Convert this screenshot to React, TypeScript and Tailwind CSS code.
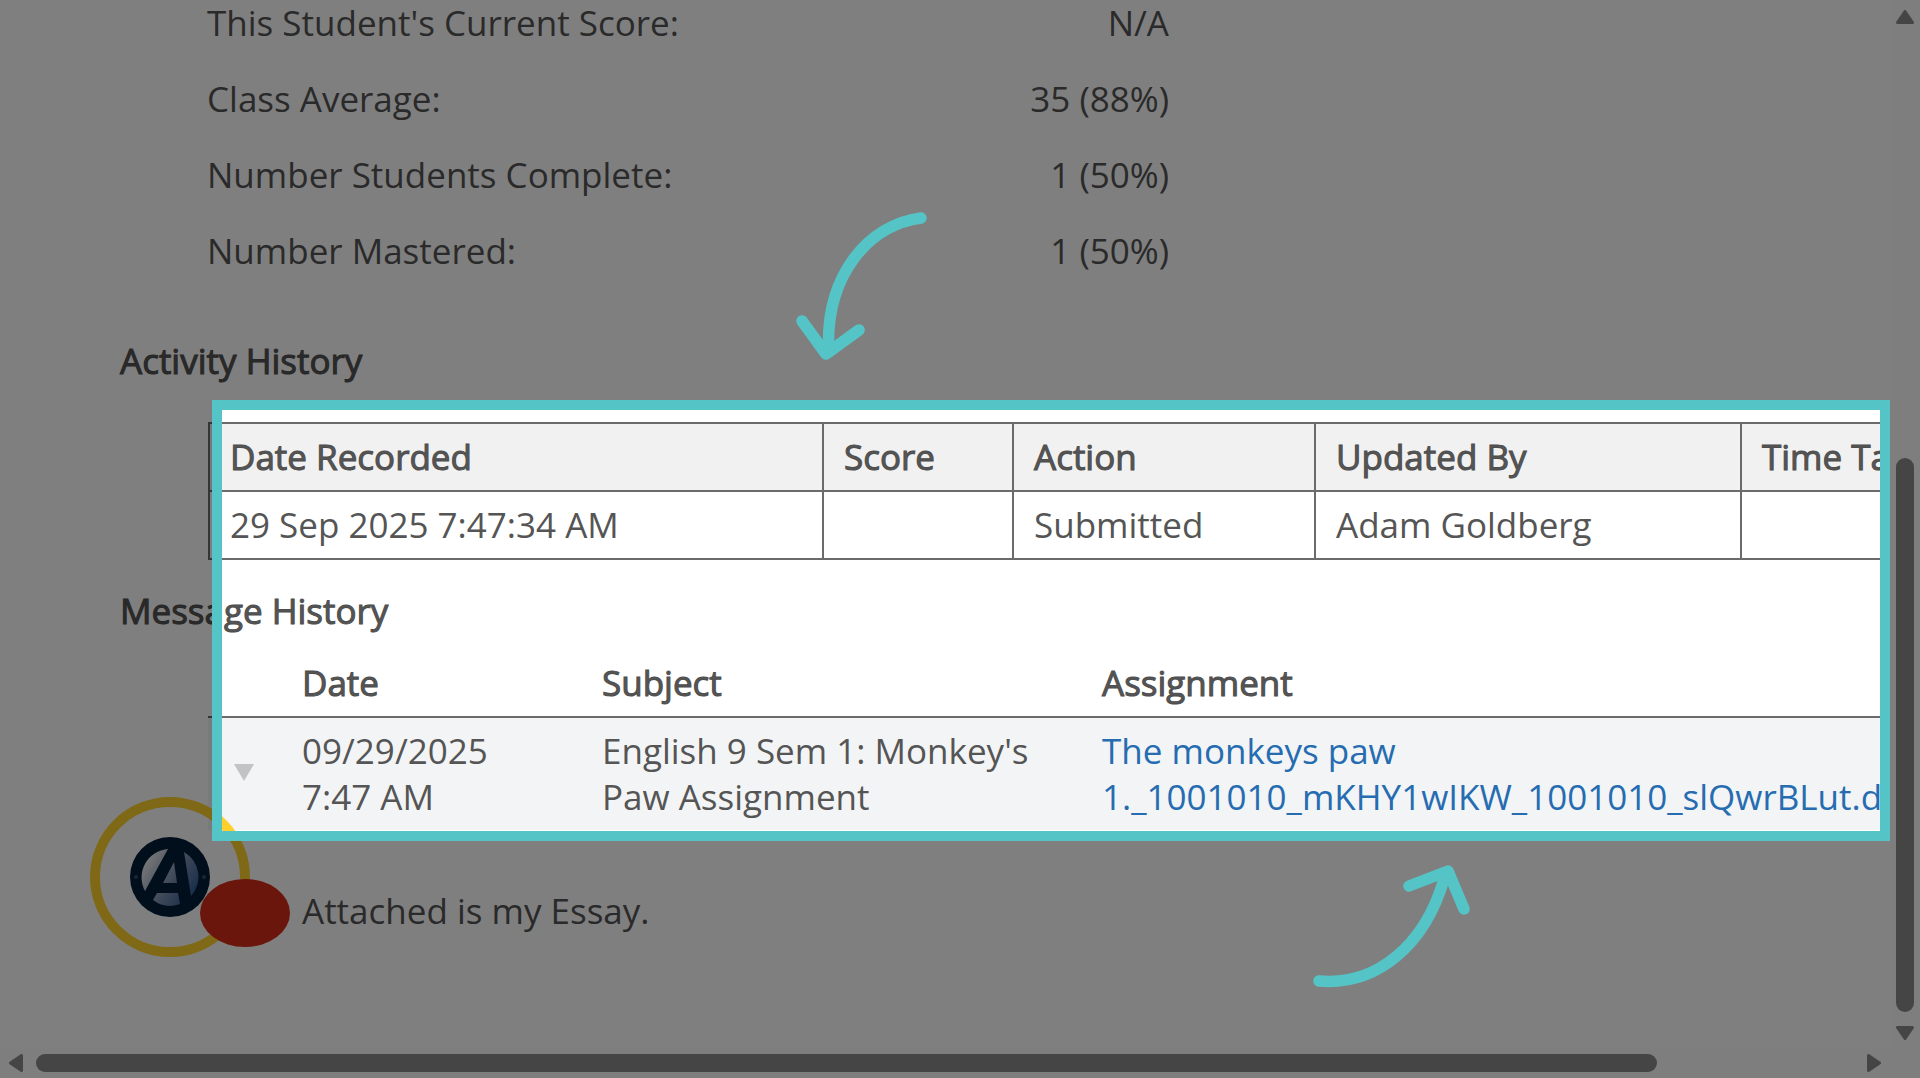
const stats = [
  { label: "This Student's Current Score:", value: "N/A" },
  { label: "Class Average:", value: "35 (88%)" },
  { label: "Number Students Complete:", value: "1 (50%)" },
  { label: "Number Mastered:", value: "1 (50%)" }
];

const activity = [
  { date: "29 Sep 2025 7:47:34 AM", score: "", action: "Submitted", updatedBy: "Adam Goldberg", timeTaken: "" }
];

const heading = "font-normal [-webkit-text-stroke:1px_#4d4d4d]";
const cell = "border-2 border-[#6b6b6b] px-5 py-[10px] whitespace-nowrap";

function Avatar() {
  return (
    <div className="absolute left-[90px] -top-[33px]">
      <div className="flex h-40 w-40 items-center justify-center rounded-full border-[10px] border-[#ffd02c]">
        <svg viewBox="-40 -40 80 80" className="h-20 w-20" aria-hidden="true">
          <defs>
            <linearGradient id="globe" gradientUnits="userSpaceOnUse" x1="-26" y1="-18" x2="26" y2="14">
              <stop offset="0" stopColor="#f4f4f4" />
              <stop offset="0.55" stopColor="#8094b2" />
              <stop offset="1" stopColor="#335c96" />
            </linearGradient>
          </defs>
          <circle r="40" fill="#001e36" />
          <g fill="url(#globe)">
            <path d="M-2 -28 A28.5 28.5 0 0 0 -25 14 Z" />
            <path d="M14 -25 A28.5 28.5 0 0 1 21 19 Z" />
            <path d="M4 -15 L-7 6 L7 6 Z" />
            <path d="M-13 16 L8 16 L10 27 A28.5 28.5 0 0 1 -17 23 Z" />
          </g>
          <circle cx="-34" r="2" fill="#33506a" />
          <circle cx="34" r="2" fill="#33506a" />
        </svg>
      </div>
      <div className="absolute left-[110px] top-[82px] h-[68px] w-[90px] rounded-[50%] bg-[#d42c1a]" />
    </div>
  );
}

function ActivityTable() {
  return (
    <table className="ml-[208px] mt-[38px] w-[2100px] table-fixed border-collapse text-left">
      <thead className="bg-[#f1f1f1]">
        <tr>
          <th className={`${cell} ${heading} w-[614px]`}>Date Recorded</th>
          <th className={`${cell} ${heading} w-[190px]`}>Score</th>
          <th className={`${cell} ${heading} w-[302px]`}>Action</th>
          <th className={`${cell} ${heading} w-[426px]`}>Updated By</th>
          <th className={`${cell} ${heading}`}>Time Taken</th>
        </tr>
      </thead>
      <tbody>
        {activity.map((row) => (
          <tr key={row.date}>
            <td className={cell}>{row.date}</td>
            <td className={cell}>{row.score}</td>
            <td className={cell}>{row.action}</td>
            <td className={cell}>{row.updatedBy}</td>
            <td className={cell}>{row.timeTaken}</td>
          </tr>
        ))}
      </tbody>
    </table>
  );
}

function MessageTable() {
  return (
    <table className="ml-[208px] mt-[26px] w-[2100px] table-fixed border-collapse text-left">
      <thead>
        <tr className="border-b-2 border-[#6b6b6b]">
          <th className="w-[94px]" aria-label="Expand" />
          <th className={`${heading} w-[300px] pb-[10px]`}>Date</th>
          <th className={`${heading} w-[500px] pb-[10px]`}>Subject</th>
          <th className={`${heading} pb-[10px]`}>Assignment</th>
        </tr>
      </thead>
      <tbody>
        <tr className="bg-[#f3f4f6]">
          <td className="pl-[26px] pb-1">
            <button aria-label="Collapse message" className="block">
              <svg viewBox="0 0 20 17" className="h-[17px] w-5" aria-hidden="true">
                <path d="M0 0 H20 L10 17 Z" fill="#c3c3c3" />
              </svg>
            </button>
          </td>
          <td className="py-[10px]">
            09/29/2025
            <br />
            7:47 AM
          </td>
          <td className="py-[10px]">
            English 9 Sem 1: Monkey's
            <br />
            Paw Assignment
          </td>
          <td className="py-[10px] whitespace-nowrap">
            <a href="#assignment" className="text-[#266cb1]">
              The monkeys paw
              <br />
              1._1001010_mKHY1wIKW_1001010_slQwrBLut.docx
            </a>
          </td>
        </tr>
      </tbody>
    </table>
  );
}

function ScrollArrow({ className }: { className: string }) {
  return (
    <svg viewBox="0 0 18 14" className={`h-[14px] w-[18px] shrink-0 ${className}`} aria-hidden="true">
      <path d="M9 1.5 L16.5 12.5 H1.5 Z" fill="#8b8b8b" stroke="#8b8b8b" strokeWidth="3" strokeLinejoin="round" />
    </svg>
  );
}

export default function App() {
  return (
    <div className="relative grid h-screen grid-cols-[minmax(0,1fr)_30px] grid-rows-[minmax(0,1fr)_30px] overflow-hidden bg-white font-['Open_Sans',sans-serif] text-[35px] leading-[46px] text-[#555]">
      <main className="overflow-hidden">
        <dl className="-mt-[15px] ml-[207px] w-[962px]">
          {stats.map((stat) => (
            <div key={stat.label} className="flex h-[76px] items-center justify-between">
              <dt>{stat.label}</dt>
              <dd>{stat.value}</dd>
            </div>
          ))}
        </dl>

        <h2 className={`${heading} ml-[120px] mt-[49px]`}>Activity History</h2>
        <ActivityTable />

        <h2 className={`${heading} ml-[120px] mt-7`}>Message History</h2>
        <MessageTable />

        <div className="relative pl-[302px] pt-[58px]">
          <Avatar />
          <p>Attached is my Essay.</p>
        </div>
      </main>

      {/* vertical scroll bar */}
      <div className="flex flex-col items-center bg-[#fdfdfd] pt-[10px] pb-2">
        <ScrollArrow className="" />
        <div className="flex w-full flex-1 flex-col items-center pt-[434px] pb-[14px]">
          <div className="w-[18px] flex-1 rounded-full bg-[#8b8b8b]" />
        </div>
        <ScrollArrow className="rotate-180" />
      </div>

      {/* horizontal scroll bar */}
      <div className="flex items-center bg-[#fdfdfd] px-[7px]">
        <ScrollArrow className="-rotate-90" />
        <div className="flex-1 pl-[11px] pr-[208px]">
          <div className="h-[18px] rounded-full bg-[#8b8b8b]" />
        </div>
        <ScrollArrow className="rotate-90" />
      </div>
      <div className="bg-[#fdfdfd]" />

      {/* spotlight: everything outside the frame is dimmed */}
      <div className="pointer-events-none absolute left-[212px] right-[30px] top-[400px] h-[441px] border-[10px] border-[#55c4c7] shadow-[0_0_0_3000px_rgba(0,0,0,0.5)]" />
      <svg
        viewBox="790 205 150 160"
        className="pointer-events-none absolute left-[790px] top-[205px] h-[160px] w-[150px]"
        fill="none"
        stroke="#55c4c7"
        strokeWidth="11.5"
        strokeLinecap="round"
        strokeLinejoin="round"
        aria-hidden="true"
      >
        <path d="M921 218 C868 225 827 275 828.5 346" />
        <path d="M802 321 L826 354 L859 330" />
      </svg>
      <svg
        viewBox="1300 850 180 150"
        className="pointer-events-none absolute left-[1300px] top-[850px] h-[150px] w-[180px]"
        fill="none"
        stroke="#55c4c7"
        strokeWidth="11.5"
        strokeLinecap="round"
        strokeLinejoin="round"
        aria-hidden="true"
      >
        <path d="M1319 981 C1377 986 1425 945 1444 879" />
        <path d="M1409 886 L1448 871 L1464 909" />
      </svg>
    </div>
  );
}
